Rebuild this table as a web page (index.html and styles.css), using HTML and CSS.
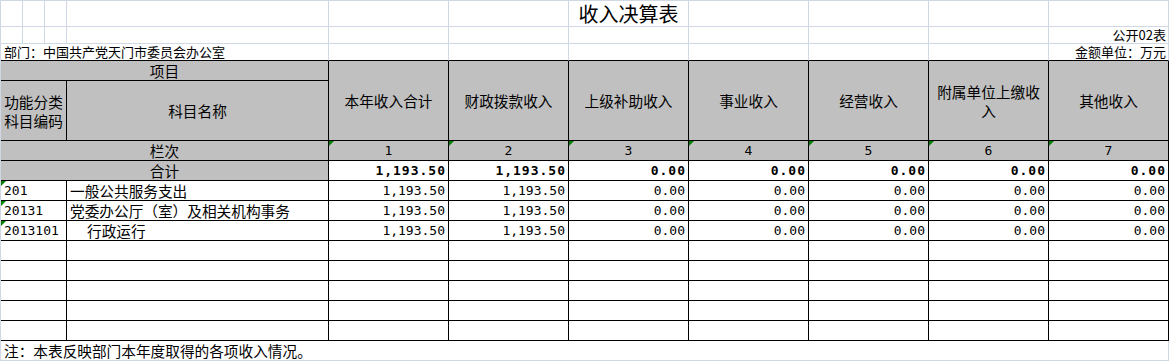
FILE: index.html
```html
<!DOCTYPE html>
<html lang="zh-CN">
<head>
<meta charset="utf-8">
<title>收入决算表</title>
<link rel="stylesheet" href="styles.css">
</head>
<body>
<div class="sheet">
  <!-- row 1: title -->
  <div class="g"></div><div class="g"></div><div class="g"></div><div class="g"></div>
  <div class="g"></div><div class="g"></div>
  <div class="g title">收入决算表</div>
  <div class="g"></div><div class="g"></div><div class="g"></div><div class="g"></div>

  <!-- row 2 -->
  <div class="g"></div><div class="g"></div><div class="g"></div><div class="g"></div>
  <div class="g"></div><div class="g"></div><div class="g"></div><div class="g"></div>
  <div class="g"></div><div class="g"></div>
  <div class="g small right">公开02表</div>

  <!-- row 3 -->
  <div class="g s4 small left bb">部门：中国共产党天门市委员会办公室</div>
  <div class="g bb"></div><div class="g bb"></div><div class="g bb"></div>
  <div class="g bb"></div><div class="g bb"></div><div class="g bb"></div>
  <div class="g small right bb">金额单位：万元</div>

  <!-- header -->
  <div class="c s4 hd">项目</div>
  <div class="c r2 hd">本年收入合计</div>
  <div class="c r2 hd">财政拨款收入</div>
  <div class="c r2 hd">上级补助收入</div>
  <div class="c r2 hd">事业收入</div>
  <div class="c r2 hd">经营收入</div>
  <div class="c r2 hd wrap">附属单位上缴收<br>入</div>
  <div class="c r2 hd">其他收入</div>
  <div class="c s3 hd wrap">功能分类<br>科目编码</div>
  <div class="c hd">科目名称</div>

  <!-- 栏次 -->
  <div class="c s4 hd">栏次</div>
  <div class="c hd num mark">1</div>
  <div class="c hd num mark">2</div>
  <div class="c hd num mark">3</div>
  <div class="c hd num mark">4</div>
  <div class="c hd num mark">5</div>
  <div class="c hd num mark">6</div>
  <div class="c hd num mark">7</div>

  <!-- 合计 -->
  <div class="c s4 hd">合计</div>
  <div class="c amt bold">1,193.50</div>
  <div class="c amt bold">1,193.50</div>
  <div class="c amt bold">0.00</div>
  <div class="c amt bold">0.00</div>
  <div class="c amt bold">0.00</div>
  <div class="c amt bold">0.00</div>
  <div class="c amt bold">0.00</div>

  <!-- data -->
  <div class="c s3 code mark">201</div>
  <div class="c name">一般公共服务支出</div>
  <div class="c amt">1,193.50</div>
  <div class="c amt">1,193.50</div>
  <div class="c amt">0.00</div>
  <div class="c amt">0.00</div>
  <div class="c amt">0.00</div>
  <div class="c amt">0.00</div>
  <div class="c amt">0.00</div>

  <div class="c s3 code mark">20131</div>
  <div class="c name">党委办公厅（室）及相关机构事务</div>
  <div class="c amt">1,193.50</div>
  <div class="c amt">1,193.50</div>
  <div class="c amt">0.00</div>
  <div class="c amt">0.00</div>
  <div class="c amt">0.00</div>
  <div class="c amt">0.00</div>
  <div class="c amt">0.00</div>

  <div class="c s3 code mark">2013101</div>
  <div class="c name indent">行政运行</div>
  <div class="c amt">1,193.50</div>
  <div class="c amt">1,193.50</div>
  <div class="c amt">0.00</div>
  <div class="c amt">0.00</div>
  <div class="c amt">0.00</div>
  <div class="c amt">0.00</div>
  <div class="c amt">0.00</div>

  <div class="c s3"></div><div class="c"></div><div class="c"></div><div class="c"></div><div class="c"></div><div class="c"></div><div class="c"></div><div class="c"></div><div class="c"></div>
  <div class="c s3"></div><div class="c"></div><div class="c"></div><div class="c"></div><div class="c"></div><div class="c"></div><div class="c"></div><div class="c"></div><div class="c"></div>
  <div class="c s3"></div><div class="c"></div><div class="c"></div><div class="c"></div><div class="c"></div><div class="c"></div><div class="c"></div><div class="c"></div><div class="c"></div>
  <div class="c s3"></div><div class="c"></div><div class="c"></div><div class="c"></div><div class="c"></div><div class="c"></div><div class="c"></div><div class="c"></div><div class="c"></div>
  <div class="c s3"></div><div class="c"></div><div class="c"></div><div class="c"></div><div class="c"></div><div class="c"></div><div class="c"></div><div class="c"></div><div class="c"></div>

  <!-- footnote -->
  <div class="g s11 note">注：本表反映部门本年度取得的各项收入情况。</div>
</div>
</body>
</html>
```

FILE: styles.css
```css
html, body {
  margin: 0;
  padding: 0;
  background: #ffffff;
}

body {
  font-family: "Noto Sans CJK SC", "Noto Sans", sans-serif;
  color: #000000;
  font-size: 14.67px;
}

.sheet {
  display: grid;
  grid-template-columns: 22px 22px 22px 262px repeat(7, 120px);
  grid-template-rows: 26px 17px 17px 20px 60px 20px 20px repeat(8, 20px) 20px;
  border-left: 1px solid #d0d7e5;
  border-top: 1px solid #d0d7e5;
  width: 1168px;
}

.g,
.c {
  box-sizing: border-box;
  position: relative;
  display: flex;
  align-items: center;
  justify-content: center;
  white-space: nowrap;
  overflow: visible;
  line-height: 19px;
}

.g {
  border-right: 1px solid #d0d7e5;
  border-bottom: 1px solid #d0d7e5;
}

.g.bb {
  border-bottom-color: #000000;
}

.c {
  border-right: 1px solid #000000;
  border-bottom: 1px solid #000000;
}

.s3 { grid-column: span 3; }
.s4 { grid-column: span 4; }
.s11 { grid-column: span 11; }
.r2 { grid-row: span 2; }

.title {
  font-size: 20px;
  align-items: flex-end;
  padding-bottom: 1px;
  line-height: 22px;
}

.small {
  font-size: 13px;
  line-height: 16px;
}

.left { justify-content: flex-start; padding-left: 3px; }
.right { justify-content: flex-end; padding-right: 2px; }

.hd {
  background: #c0c0c0;
}

.wrap {
  white-space: normal;
  text-align: center;
}

.num {
  font-family: "DejaVu Sans Mono", "Liberation Mono", monospace;
  font-size: 13px;
  font-weight: 300;
  align-items: flex-end;
}

.amt {
  font-family: "DejaVu Sans Mono", "Liberation Mono", monospace;
  font-size: 13px;
  justify-content: flex-end;
  align-items: flex-end;
  padding-right: 3px;
}

.amt.bold {
  font-weight: bold;
  letter-spacing: 1px;
  padding-right: 2px;
}

.code {
  font-family: "DejaVu Sans Mono", "Liberation Mono", monospace;
  font-size: 13px;
  justify-content: flex-start;
  align-items: flex-end;
  padding-left: 3px;
}

.name {
  justify-content: flex-start;
  align-items: flex-end;
  padding-left: 3px;
}

.name.indent {
  padding-left: 20px;
}

.mark::before {
  content: "";
  position: absolute;
  top: 0;
  left: 0;
  width: 0;
  height: 0;
  border-top: 5px solid #008000;
  border-right: 5px solid transparent;
}

.note {
  justify-content: flex-start;
  align-items: flex-end;
  padding-left: 3px;
}
```
